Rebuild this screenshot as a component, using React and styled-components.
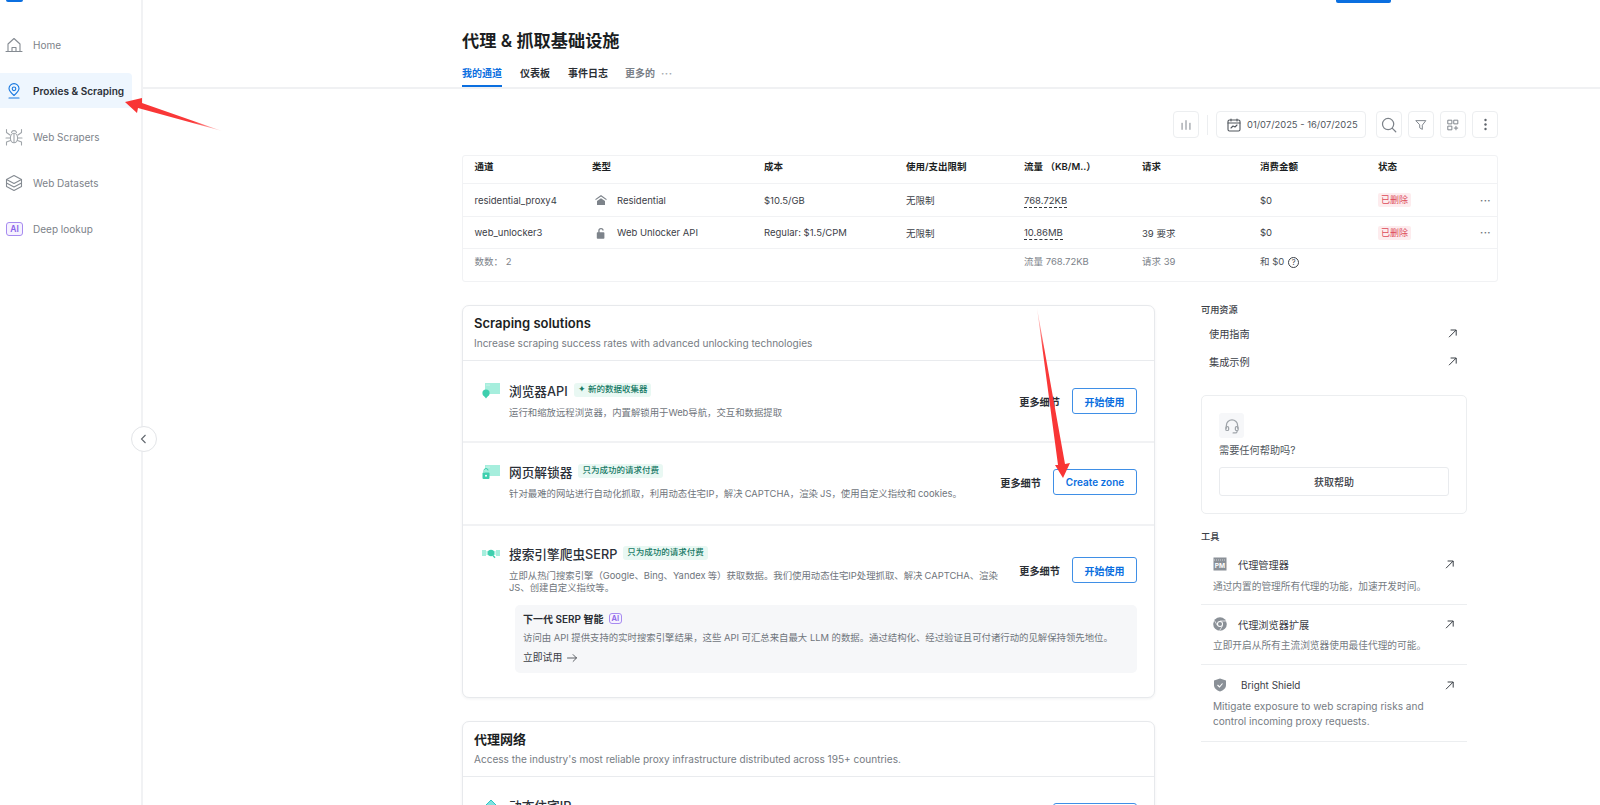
import React from "react";
import styled, { createGlobalStyle } from "styled-components";

const Global = createGlobalStyle`
  html, body { margin: 0; padding: 0; background: #fff; }
  body { width: 1600px; height: 805px; overflow: hidden; font-family: Inter, "Noto Sans CJK SC", sans-serif; color: #22262b; -webkit-font-smoothing: antialiased; }
  * { box-sizing: border-box; }
`;
const Page = styled.div`display: flex; width: 1600px; height: 805px; overflow: hidden; position: relative; background: #fff;`;
const Sidebar = styled.aside`width: 143px; flex: none; border-right: 2px solid #f1f2f4; display: flex; flex-direction: column;`;
const Logo = styled.div`width: 17px; height: 2px; margin-left: 6px; background: #0b6fe0; border-radius: 0 0 2px 2px;`;
const Nav = styled.nav`display: flex; flex-direction: column; gap: 11px; margin-top: 25px; width: 132px;`;
const NavItem = styled.div`
  height: 35px; display: flex; align-items: center; gap: 10px; padding-left: 5px;
  font-size: ${p => (p.$active ? 10.05 : 10)}px; font-weight: ${p => (p.$active ? 600 : 400)};
  color: ${p => (p.$active ? "#2b3038" : "#7c8289")};
  background: ${p => (p.$active ? "#eef6fe" : "transparent")};
  border-radius: 0 4px 4px 0;
`;
const NavIcon = styled.svg`width: 18px; height: 18px; flex: none; fill: none; stroke: ${p => p.$c || "#858b92"}; stroke-width: 1.1; stroke-linecap: round; stroke-linejoin: round;`;
const NavAi = styled.span`
  width: 17px; height: 14px; margin-left: 1px; flex: none; display: flex; align-items: center; justify-content: center;
  border: 1px solid #a78bf0; border-radius: 3px; background: #f6f2ff; color: #8a63e8; font-size: 8.5px; font-weight: 600;
`;
const Collapse = styled.button`
  position: absolute; left: 131px; top: 426px; width: 26px; height: 26px; border-radius: 50%;
  background: #fff; border: 1px solid #e3e5e8; display: flex; align-items: center; justify-content: center; padding: 0; color: #5f656c;
`;
const Main = styled.main`flex: 1; min-width: 0; display: flex; flex-direction: column;`;
const Header = styled.header`height: 89px; flex: none; border-bottom: 2px solid #f0f1f3; padding-left: 319px; display: flex; flex-direction: column;`;
const TopBar = styled.div`height: 3px; display: flex; padding-left: 874px;`;
const TopButton = styled.div`width: 55px; height: 3px; background: #0b6fe0; border-radius: 0 0 2px 2px;`;
const Title = styled.h1`margin: 25px 0 0; font-size: 17.2px; line-height: 26px; font-weight: 600; color: #1b1e22;`;
const Tabs = styled.div`display: flex; margin-top: 6px; height: 27px;`;
const Tab = styled.div`
  margin-right: ${p => p.$gap}px; height: 27px; padding-top: 5px; line-height: 16px; font-size: 10px; font-weight: 600;
  color: ${p => (p.$active ? "#0b6fe0" : p.$muted ? "#7a8087" : "#2a2e34")};
  border-bottom: 2px solid ${p => (p.$active ? "#0b6fe0" : "transparent")};
  display: flex; gap: 6px;
`;
const Dots = styled.span`color: #a5a9ae; letter-spacing: 0.5px; font-weight: 700;`;
const Body = styled.div`padding: 22px 102px 0 319px; display: flex; flex-direction: column;`;
const Toolbar = styled.div`display: flex; justify-content: flex-end; gap: 6px; align-items: center; height: 27px;`;
const ToolButton = styled.button`
  width: 26px; height: 27px; padding: 0; background: #fff; border: 1px solid #eceef0; border-radius: 4px; display: flex; align-items: center; justify-content: center; color: #7c8289;
`;
const Sep = styled.div`width: 1px; height: 20px; background: #eceef0; margin: 0 2px 0 2px;`;
const DateBox = styled.div`
  width: 150px; height: 27px; margin-right: 4px; border: 1px solid #eceef0; border-radius: 4px; display: flex; align-items: center; gap: 5px; padding-left: 9px;
  font-size: 9.4px; color: #50565d; white-space: nowrap;
`;
const Table = styled.section`margin-top: 17px; border: 1px solid #f1f2f4; border-radius: 3px;`;
const TRow = styled.div`
  display: grid; grid-template-columns: 117.5px 172px 142px 118px 118px 118px 118px 1fr; padding-left: 11.5px; align-items: center;
  height: ${p => p.$h}px; padding-bottom: ${p => p.$pb || 0}px; font-size: 9.5px; color: ${p => (p.$foot ? "#7c8289" : "#3b4047")};
  font-weight: ${p => (p.$head ? 600 : 400)};
  ${p => p.$head && "color: #1b1e22;"}
  border-bottom: ${p => (p.$last ? "none" : "1px solid #f1f2f4")};
  white-space: nowrap;
`;
const TypeCell = styled.div`display: flex; align-items: center; gap: 10px; padding-left: 3px;`;
const TypeIcon = styled.svg`width: 12px; height: 12px; fill: #7d838a; flex: none;`;
const Metered = styled.span`border-bottom: 1px dashed #34383e; padding-bottom: 1px; color: #3b4047;`;
const Status = styled.div`display: flex; align-items: center; justify-content: space-between; padding-right: 6px;`;
const Deleted = styled.span`background: #fdecee; color: #dc4a58; font-size: 9px; padding: 1px 3px; border-radius: 2px; line-height: 12px;`;
const More = styled.span`color: #6a7076; font-weight: 700; font-size: 9.5px; letter-spacing: .5px;`;
const FootSum = styled.div`color: #50565d;`;
const HelpMark = styled.span`display: inline-flex; width: 11px; height: 11px; border: 1px solid #3b4047; border-radius: 50%; align-items: center; justify-content: center; font-size: 7.5px; color: #3b4047; margin-left: 4px;`;
const Columns = styled.div`display: flex; margin-top: 23px; align-items: flex-start;`;
const Left = styled.div`width: 693px; flex: none; display: flex; flex-direction: column; gap: 23px;`;
const Card = styled.section`border: 1px solid #e7e9ec; border-radius: 7px; background: #fff; box-shadow: 0 1px 3px rgba(20,30,50,.06);`;
const CardHead = styled.div`height: ${p => p.$h}px; padding: 8px 11px 0; border-bottom: 1px solid #e9ebee;`;
const CardTitle = styled.h2`margin: 0; font-size: 13px; line-height: 18px; font-weight: 600; color: #1b1e22;`;
const CardSub = styled.p`margin: 4px 0 0; font-size: 10.05px; line-height: 14px; color: #767c83;`;
const Solution = styled.div`
  min-height: ${p => p.$h}px; padding: ${p => p.$pt}px 17px 0 18px; display: grid; grid-template-columns: 28px minmax(0, 1fr) auto; grid-auto-rows: min-content;
  border-bottom: ${p => (p.$last ? "none" : "2px solid #f1f2f4")};
`;
const RowIcon = styled.svg`width: 20px; height: 18px; margin-top: 2px;`;
const SolTitle = styled.div`display: flex; align-items: center; gap: 6px; height: 20px; font-size: 12.7px; font-weight: 500; color: #2b3038;`;
const Tag = styled.span`background: #e9f8f3; color: #177a66; font-size: 8.5px; line-height: 13px; height: 14px; padding: 0 4px; border-radius: 3px; font-weight: 500;`;
const SolDesc = styled.p`margin: 7px 0 0; width: ${p => p.$w || 500}px; font-size: 9.4px; line-height: 12px; word-spacing: -.5px; color: #6f757c;`;
const Actions = styled.div`display: flex; align-items: center; gap: 12px; height: 26px; align-self: start; margin-top: ${p => p.$mt || 0}px;`;
const Detail = styled.span`font-size: 10.2px; font-weight: 600; color: #2a2e34; white-space: nowrap;`;
const Primary = styled.button`
  height: 26px; width: ${p => p.$w}px; background: #fff; border: 1px solid #3f8fe6; border-radius: 3px; color: #0b6fe0; font: 600 10px Inter, "Noto Sans CJK SC", sans-serif; padding: 0;
`;
const Inset = styled.div`grid-column: 2 / 4; margin: 11px 0 0 6px; height: 68px; background: #f6f7f9; border-radius: 5px; padding: 6px 8px 0;`;
const InsetTitle = styled.div`display: flex; align-items: center; gap: 5px; height: 14px; font-size: 10px; font-weight: 600; color: #2a2e34;`;
const AiBadge = styled.span`border: 1px solid #a78bf0; border-radius: 3px; color: #8a63e8; font-size: 7.5px; font-weight: 600; padding: 0 2px; line-height: 9px; background: #f6f2ff;`;
const InsetDesc = styled.p`margin: 7px 0 0; font-size: 9.4px; line-height: 12px; color: #6f757c; white-space: nowrap;`;
const TryLink = styled.div`display: flex; align-items: center; gap: 4px; margin-top: 7px; font-size: 9.8px; line-height: 14px; color: #3b4047;`;
const Right = styled.aside`width: 266px; margin-left: 46px; margin-top: -1px; flex: none; display: flex; flex-direction: column;`;
const SideLabel = styled.div`font-size: 9.2px; line-height: 12px; font-weight: 500; color: #3b4047; margin-top: ${p => p.$mt || 0}px;`;
const Links = styled.div`margin-top: 3px; display: flex; flex-direction: column;`;
const LinkRow = styled.div`height: 28.5px; padding: 0 9px 0 8px; display: flex; align-items: center; justify-content: space-between; font-size: 10.2px; color: #3b4047;`;
const HelpCard = styled.div`margin-top: 19px; height: 119px; border: 1px solid #eceef0; border-radius: 5px; padding: 17px 17px 0; display: flex; flex-direction: column;`;
const HelpIcon = styled.div`width: 25px; height: 25px; border-radius: 3px; background: #f6f7f9; display: flex; align-items: center; justify-content: center; color: #a0a5aa;`;
const HelpText = styled.div`margin-top: 5px; font-size: 10.2px; line-height: 14px; color: #50565d;`;
const HelpButton = styled.button`margin-top: 10px; width: 230px; height: 29px; background: #fff; border: 1px solid #e9ebee; border-radius: 3px; font: 500 10px Inter, "Noto Sans CJK SC", sans-serif; color: #3b4047;`;
const Tool = styled.div`padding: ${p => p.$pt || 11}px 12px 0; height: ${p => p.$h}px; border-bottom: 1px solid #eceef0;`;
const ToolHead = styled.div`display: flex; align-items: center; gap: 11px; height: 16px; font-size: ${p => p.$s || 10.2}px; color: #3b4047;`;
const ToolIcon = styled.svg`width: 14px; height: 14px; flex: none;`;
const ToolName = styled.span`flex: 1; margin-left: ${p => p.$ml || 0}px;`;
const ToolDesc = styled.p`margin: ${p => p.$mt || 6}px 0 0; font-size: ${p => p.$s || 9.7}px; line-height: 15px; color: #767c83;`;
const Overlay = styled.svg`position: absolute; inset: 0; width: 1600px; height: 805px; pointer-events: none;`;

const Ext = () => (
  <svg width="11" height="11" viewBox="0 0 11 11" fill="none" stroke="#3b4047" strokeWidth="1"><path d="M2 9.2 9.2 2M3.6 2h5.6v5.6" /></svg>
);
const Ic = ({ children, w = 14 }) => (
  <svg width={w} height={w} viewBox="0 0 16 16" fill="none" stroke="currentColor" strokeWidth="1.1" strokeLinecap="round" strokeLinejoin="round">{children}</svg>
);
const Arrow = () => (<Ic w={12}><path d="M2 8h12M9.5 3.5 14 8l-4.5 4.5" /></Ic>);

export default function App() {
  return (
    <Page>
      <Global />
      <Sidebar>
        <Logo />
        <Nav>
          <NavItem>
            <NavIcon viewBox="0 0 18 18"><path d="M1 15.5h16M3 15.5V8l6-5.5L15 8v7.5M7 15.5v-4h4v4" /></NavIcon>Home
          </NavItem>
          <NavItem $active>
            <NavIcon viewBox="0 0 18 18" $c="#1878e0"><path d="M9 13.5C6 11 4 9 4 6.6a5 5 0 0 1 10 0C14 9 12 11 9 13.5Z" /><circle cx="9" cy="6.8" r="1.8" /><path d="M4 16h10" /></NavIcon>Proxies &amp; Scraping
          </NavItem>
          <NavItem>
            <NavIcon viewBox="0 0 18 18" $c="#a0a5aa"><ellipse cx="9" cy="10" rx="3.6" ry="4.8" /><path d="M6.5 4.5a2.6 2.6 0 0 1 5 0M1.5 1.5v3l3.5 2.5M16.5 1.5v3L13 7M1 10h4M17 10h-4M1.5 17v-3L5.5 12.5M16.5 17v-3L12.5 12.5M9 6v8.5" /></NavIcon>Web Scrapers
          </NavItem>
          <NavItem>
            <NavIcon viewBox="0 0 18 18"><path d="M9 1.5 16.5 5.5 9 9.5 1.5 5.5Z" /><path d="M1.5 5.5v7L9 16.5l7.5-4v-7M1.5 9 9 13l7.5-4" /></NavIcon>Web Datasets
          </NavItem>
          <NavItem>
            <NavAi>AI</NavAi>Deep lookup
          </NavItem>
        </Nav>
      </Sidebar>
      <Collapse aria-label="collapse"><svg width="12" height="12" viewBox="0 0 12 12" fill="none" stroke="currentColor" strokeWidth="1.1"><path d="M7.5 2 3.5 6l4 4" /></svg></Collapse>
      <Main>
        <Header>
          <TopBar><TopButton /></TopBar>
          <Title>代理 &amp; 抓取基础设施</Title>
          <Tabs>
            <Tab $active $gap={18}>我的通道</Tab>
            <Tab $gap={18}>仪表板</Tab>
            <Tab $gap={17}>事件日志</Tab>
            <Tab $muted $gap={0}>更多的<Dots>···</Dots></Tab>
          </Tabs>
        </Header>
        <Body>
          <Toolbar>
            <ToolButton><Ic><path d="M3.5 6v7M8 3v10M12.5 6v7" /></Ic></ToolButton>
            <Sep />
            <DateBox>
              <Ic w={16}><rect x="2" y="3" width="12" height="11" rx="1.5" /><path d="M2 6h12M5 2v2M11 2v2M5 11l2-2 2 1 2-2" /></Ic>
              01/07/2025 - 16/07/2025
            </DateBox>
            <ToolButton><Ic w={18}><circle cx="7.2" cy="7.2" r="5" /><path d="m11 11 3 3" /></Ic></ToolButton>
            <ToolButton><Ic><path d="M2.5 3h11L9.5 8.2V13l-3-1.8v-3Z" /></Ic></ToolButton>
            <ToolButton><Ic><rect x="2.5" y="2.5" width="4.2" height="4.2" /><rect x="9.3" y="2.5" width="4.2" height="4.2" /><rect x="2.5" y="9.3" width="4.2" height="4.2" /><path d="M11.4 9.5v4M9.4 11.5h4" /></Ic></ToolButton>
            <ToolButton><svg width="3" height="13" viewBox="0 0 3 13" fill="#5f656c"><circle cx="1.5" cy="2" r="1.2" /><circle cx="1.5" cy="6.5" r="1.2" /><circle cx="1.5" cy="11" r="1.2" /></svg></ToolButton>
          </Toolbar>
          <Table>
            <TRow $head $h={28} $pb={7}>
              <div>通道</div><div>类型</div><div>成本</div><div>使用/支出限制</div><div>流量 （KB/M..）</div><div>请求</div><div>消费金额</div><div>状态</div>
            </TRow>
            <TRow $h={33}>
              <div>residential_proxy4</div>
              <TypeCell><TypeIcon viewBox="0 0 12 12"><path d="M6 1 11.5 5v1.2L6 2.4.5 6.2V5ZM2 7l4-2.8L10 7v4H2Z" /></TypeIcon>Residential</TypeCell>
              <div>$10.5/GB</div><div>无限制</div><div><Metered>768.72KB</Metered></div><div /><div>$0</div>
              <Status><Deleted>已删除</Deleted><More>···</More></Status>
            </TRow>
            <TRow $h={32}>
              <div>web_unlocker3</div>
              <TypeCell><TypeIcon viewBox="0 0 12 12"><path d="M2.5 5.2h.8V3.6a2.7 2.7 0 0 1 5.4 0h-1.3a1.4 1.4 0 0 0-2.8 0v1.6h4a.8.8 0 0 1 .8.8v5a.8.8 0 0 1-.8.8h-6a.8.8 0 0 1-.8-.8V6a.8.8 0 0 1 .7-.8Z" /></TypeIcon>Web Unlocker API</TypeCell>
              <div>Regular: $1.5/CPM</div><div>无限制</div><div><Metered>10.86MB</Metered></div><div>39 要求</div><div>$0</div>
              <Status><Deleted>已删除</Deleted><More>···</More></Status>
            </TRow>
            <TRow $foot $last $h={32} $pb={8}>
              <div>数数：  2</div><div /><div /><div /><div>流量 768.72KB</div><div>请求 39</div>
              <FootSum>和 $0<HelpMark>?</HelpMark></FootSum><div />
            </TRow>
          </Table>
          <Columns>
            <Left>
              <Card>
                <CardHead $h={55}>
                  <CardTitle>Scraping solutions</CardTitle>
                  <CardSub>Increase scraping success rates with advanced unlocking technologies</CardSub>
                </CardHead>
                <Solution $h={82} $pt={19}>
                  <RowIcon viewBox="0 0 20 18"><rect x="4" y="1" width="15" height="11" fill="#a6eedd" /><circle cx="6" cy="3" r=".5" fill="#fff" /><circle cx="8" cy="3" r=".5" fill="#fff" /><circle cx="5" cy="11" r="3.6" fill="#3ecfae" /><path d="M3 14h4l-2 2.5Z" fill="#3ecfae" /></RowIcon>
                  <div>
                    <SolTitle>浏览器API<Tag>✦ 新的数据收集器</Tag></SolTitle>
                    <SolDesc>运行和缩放远程浏览器，内置解锁用于Web导航，交互和数据提取</SolDesc>
                  </div>
                  <Actions $mt={8}><Detail>更多细节</Detail><Primary $w={65}>开始使用</Primary></Actions>
                </Solution>
                <Solution $h={83} $pt={18}>
                  <RowIcon viewBox="0 0 20 18"><rect x="4" y="2" width="15" height="11" fill="#a6eedd" /><circle cx="6" cy="4" r=".5" fill="#fff" /><circle cx="8" cy="4" r=".5" fill="#fff" /><rect x="1.5" y="9.5" width="7" height="6.5" rx="1" fill="#3ecfae" /><path d="M3 9.5V7.5a2 2 0 0 1 4 0" fill="none" stroke="#3ecfae" strokeWidth="1" /><circle cx="5" cy="12.7" r="1" fill="#fff" /></RowIcon>
                  <div>
                    <SolTitle>网页解锁器<Tag>只为成功的请求付费</Tag></SolTitle>
                    <SolDesc>针对最难的网站进行自动化抓取，利用动态住宅IP，解决 CAPTCHA，渲染 JS，使用自定义指纹和 cookies。</SolDesc>
                  </div>
                  <Actions $mt={8}><Detail>更多细节</Detail><Primary $w={84}>Create zone</Primary></Actions>
                </Solution>
                <Solution $h={171} $pt={17} $last>
                  <RowIcon viewBox="0 0 20 18"><rect x="1" y="5" width="4" height="6" fill="#a6eedd" /><rect x="15" y="5" width="4" height="6" fill="#a6eedd" /><rect x="5.5" y="6" width="9" height="4" fill="#a6eedd" /><circle cx="10" cy="8" r="3.2" fill="#3ecfae" /><path d="m12 10.5 2 2.2" stroke="#3ecfae" strokeWidth="1.3" /></RowIcon>
                  <div>
                    <SolTitle>搜索引擎爬虫SERP<Tag>只为成功的请求付费</Tag></SolTitle>
                    <SolDesc $w={492}>立即从热门搜索引擎（Google、Bing、Yandex 等）获取数据。我们使用动态住宅IP处理抓取、解决 CAPTCHA、渲染 JS、创建自定义指纹等。</SolDesc>
                  </div>
                  <Actions $mt={14}><Detail>更多细节</Detail><Primary $w={65}>开始使用</Primary></Actions>
                  <Inset>
                    <InsetTitle>下一代 SERP 智能<AiBadge>AI</AiBadge></InsetTitle>
                    <InsetDesc>访问由 API 提供支持的实时搜索引擎结果，这些 API 可汇总来自最大 LLM 的数据。通过结构化、经过验证且可付诸行动的见解保持领先地位。</InsetDesc>
                    <TryLink>立即试用 <Arrow /></TryLink>
                  </Inset>
                </Solution>
              </Card>
              <Card>
                <CardHead $h={55}>
                  <CardTitle>代理网络</CardTitle>
                  <CardSub>Access the industry's most reliable proxy infrastructure distributed across 195+ countries.</CardSub>
                </CardHead>
                <Solution $h={60} $pt={18} $last>
                  <RowIcon viewBox="0 0 20 18"><path d="M10 3 15 8l-5 5-5-5Z" fill="#7fe3e0" stroke="#2cc4c4" strokeWidth="1" /></RowIcon>
                  <div><SolTitle>动态住宅IP</SolTitle></div>
                  <Actions $mt={8}><Primary $w={84} /></Actions>
                </Solution>
              </Card>
            </Left>
            <Right>
              <SideLabel>可用资源</SideLabel>
              <Links>
                <LinkRow>使用指南<Ext /></LinkRow>
                <LinkRow>集成示例<Ext /></LinkRow>
              </Links>
              <HelpCard>
                <HelpIcon><Ic w={18}><path d="M3 10V7.5a5 5 0 0 1 10 0V10" /><rect x="2.5" y="8.5" width="2.5" height="3.5" rx="1" /><rect x="11" y="8.5" width="2.5" height="3.5" rx="1" /><path d="M12.5 12v1a1.5 1.5 0 0 1-1.5 1.2H9" /></Ic></HelpIcon>
                <HelpText>需要任何帮助吗?</HelpText>
                <HelpButton>获取帮助</HelpButton>
              </HelpCard>
              <SideLabel $mt={17}>工具</SideLabel>
              <Tool $h={62} $pt={13}>
                <ToolHead>
                  <ToolIcon viewBox="0 0 14 14"><rect x="0.5" y="0.5" width="13" height="13" fill="#8a9097" /><path d="M1 3h12" stroke="#fff" strokeWidth=".6" strokeDasharray="1 1" /><text x="7" y="11" textAnchor="middle" fontSize="6.5" fontWeight="700" fill="#fff" fontFamily="Inter">PM</text></ToolIcon>
                  <ToolName>代理管理器</ToolName><Ext />
                </ToolHead>
                <ToolDesc $mt={7}>通过内置的管理所有代理的功能，加速开发时间。</ToolDesc>
              </Tool>
              <Tool $h={60} $pt={11}>
                <ToolHead>
                  <ToolIcon viewBox="0 0 14 14"><circle cx="7" cy="7" r="6.8" fill="#8a9097" /><circle cx="7" cy="7" r="3" fill="#fff" /><circle cx="7" cy="7" r="2" fill="#8a9097" /><path d="M7 4H13M9.6 8.5 6.6 13.6M4.4 8.5 1.4 3.5" stroke="#fff" strokeWidth=".7" /></ToolIcon>
                  <ToolName>代理浏览器扩展</ToolName><Ext />
                </ToolHead>
                <ToolDesc>立即开启从所有主流浏览器使用最佳代理的可能。</ToolDesc>
              </Tool>
              <Tool $h={77} $pt={12}>
                <ToolHead $s={9.9}>
                  <ToolIcon viewBox="0 0 14 14"><path d="M7 .5 13 2.5V7c0 3.2-2.6 5.4-6 6.5C3.6 12.4 1 10.2 1 7V2.5Z" fill="#8a9097" /><path d="m4.5 7 2 2 3-3.5" fill="none" stroke="#fff" strokeWidth="1.1" /></ToolIcon>
                  <ToolName $ml={3}>Bright Shield</ToolName><Ext />
                </ToolHead>
                <ToolDesc $s={10.1}>Mitigate exposure to web scraping risks and control incoming proxy requests.</ToolDesc>
              </Tool>
            </Right>
          </Columns>
        </Body>
      </Main>
      <Overlay viewBox="0 0 1600 805">
        <defs>
          <linearGradient id="fadeA" gradientUnits="userSpaceOnUse" x1="222" y1="131" x2="125" y2="102"><stop offset="0" stopColor="#ff3b3b" stopOpacity=".15" /><stop offset=".3" stopColor="#fa3a3a" /><stop offset="1" stopColor="#f83434" /></linearGradient>
          <linearGradient id="fadeB" gradientUnits="userSpaceOnUse" x1="1037" y1="308" x2="1063" y2="478"><stop offset="0" stopColor="#ff3b3b" stopOpacity=".15" /><stop offset=".25" stopColor="#fa3a3a" /><stop offset="1" stopColor="#f83434" /></linearGradient>
        </defs>
        <path d="M125 102 142 98 142 103 222 131 138 108 137 113Z" fill="url(#fadeA)" />
        <path d="M1037 308 1065 464 1070 463 1063 478 1055 465 1058 465Z" fill="url(#fadeB)" />
      </Overlay>
    </Page>
  );
}
